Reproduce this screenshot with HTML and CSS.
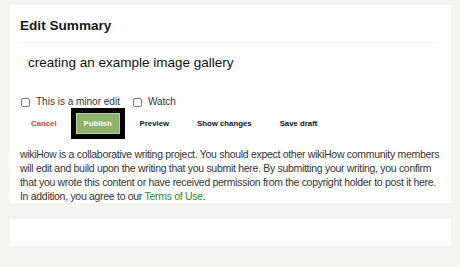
FILE: index.html
```html
<!DOCTYPE html>
<html lang="en">
<head>
    <meta charset="UTF-8">
    <title>Edit Summary</title>
    <link rel="stylesheet" href="styles.css">
</head>
<body>
    <div class="card">
        <h2>Edit Summary</h2>
        <div class="summary">creating an example image gallery</div>
        <div class="options">
            <label><span class="check"></span>This is a minor edit</label>
            <label><span class="check"></span>Watch</label>
        </div>
        <div class="actions">
            <a class="btn cancel">Cancel</a>
            <span class="highlight"><a class="btn publish">Publish</a></span>
            <a class="btn">Preview</a>
            <a class="btn">Show changes</a>
            <a class="btn">Save draft</a>
        </div>
        <p class="note">wikiHow is a collaborative writing project. You should expect other wikiHow community members will edit and build upon the writing that you submit here. By submitting your writing, you confirm that you wrote this content or have received permission from the copyright holder to post it here. In addition, you agree to our <a class="terms">Terms of Use</a>.</p>
    </div>
    <div class="card empty"></div>
</body>
</html>
```

FILE: styles.css
```css
body {
    font-family: "Liberation Sans", Arial, sans-serif;
    background-color: #f4f4f2;
    margin: 0;
    padding: 5px 9px 0 10px;
    color: #222;
}
.card {
    background: #ffffff;
    height: 198px;
    padding: 0 10px;
    box-sizing: border-box;
    overflow: hidden;
}
h2 {
    font-size: 13.6px;
    font-weight: bold;
    margin: 0;
    padding-top: 12px;
    line-height: 17px;
    color: #1a1a1a;
}
.summary {
    margin: 8px 6px 0 2px;
    border-top: 1px solid #f6f6f4;
    height: 40px;
    line-height: 40px;
    padding-left: 6px;
    font-size: 13.5px;
    color: #111;
}
.options {
    display: flex;
    gap: 12px;
    margin-top: 12px;
    font-size: 10px;
    color: #333;
    line-height: 14px;
}
.options label {
    display: flex;
    align-items: center;
}
.check {
    width: 7px;
    height: 7px;
    border: 1px solid #777;
    border-radius: 2px;
    margin: 0 6px 0 1px;
}
.actions {
    display: flex;
    align-items: center;
    margin-top: -2px;
    height: 33px;
}
.btn {
    font-size: 7.8px;
    font-weight: bold;
    color: #111;
}
.cancel {
    color: #e03a3a;
    margin-left: 11px;
    margin-right: 14px;
}
.highlight {
    background: #000;
    padding: 5px;
    margin-right: 15px;
}
.publish {
    display: block;
    background: #8db26c;
    border: 1px solid #b5d39b;
    color: #fff;
    width: 42px;
    height: 19px;
    line-height: 19px;
    text-align: center;
}
.actions .btn:nth-child(4) {
    margin: 0 28px;
}
.note {
    font-size: 10.5px;
    letter-spacing: -0.3px;
    line-height: 14px;
    color: #333;
    margin: 7px 0 0;
}
.terms {
    color: #2e8b2e;
}
.card.empty {
    height: 27px;
    margin-top: 16px;
}
```
